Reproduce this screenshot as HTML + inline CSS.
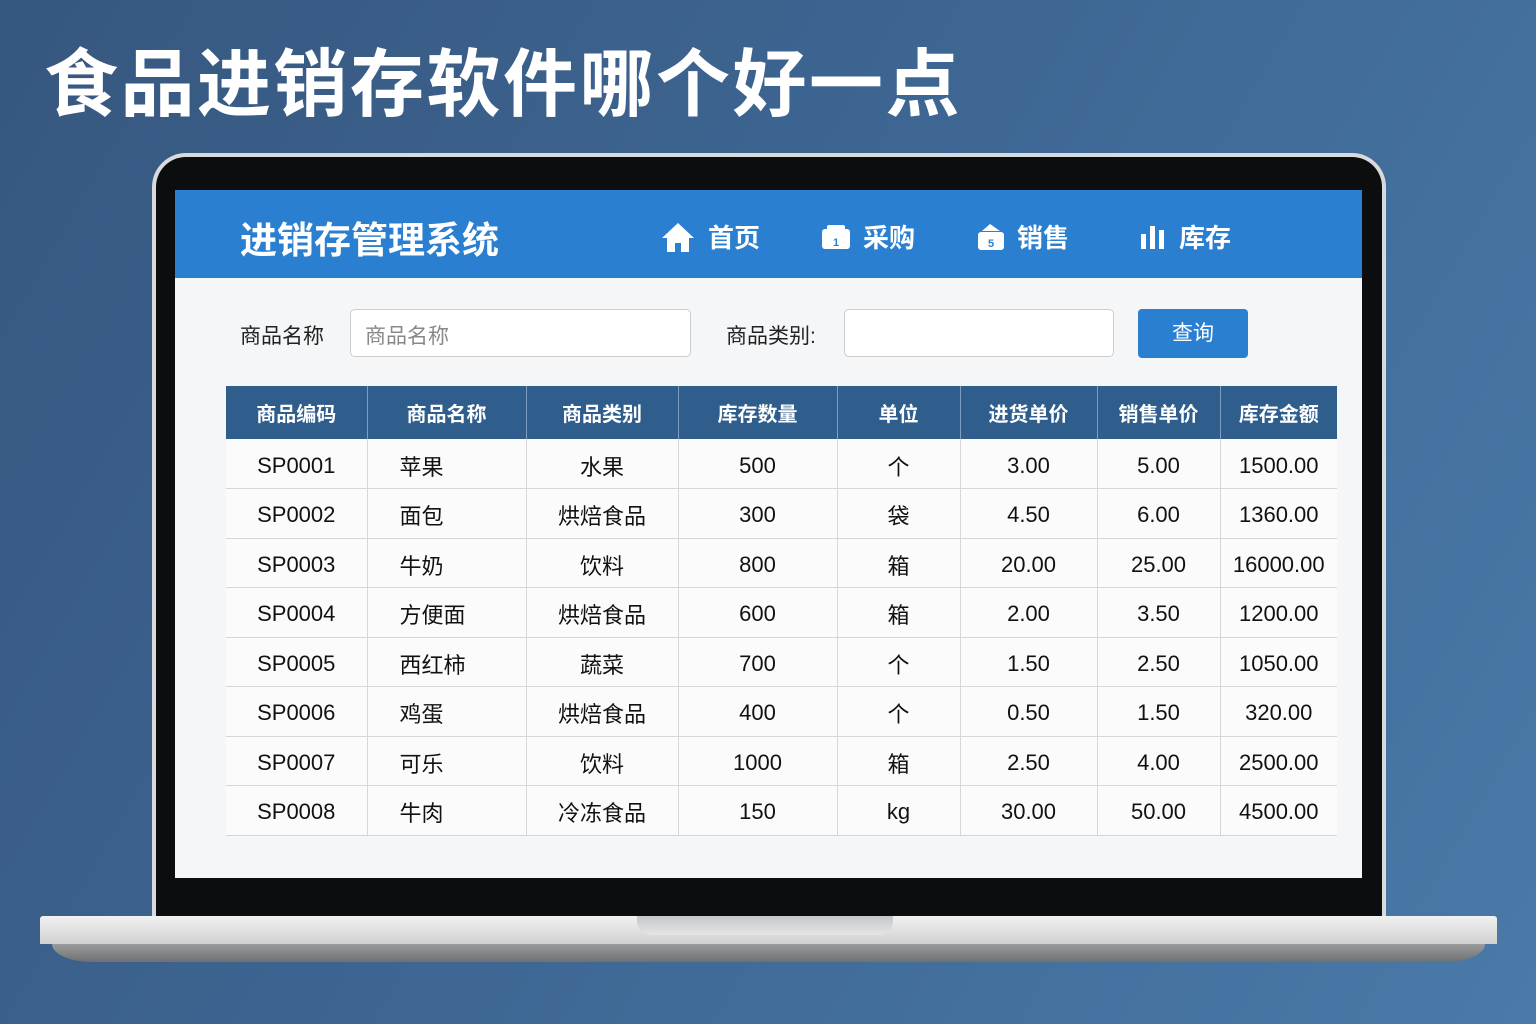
<!DOCTYPE html>
<html><head><meta charset="utf-8"><style>
*{margin:0;padding:0;box-sizing:border-box}
body{width:1536px;height:1024px;overflow:hidden;background:linear-gradient(120deg,#36577f 0%,#3e6794 50%,#4a7aa8 100%);font-family:"Liberation Sans","Noto Sans CJK SC",sans-serif;position:relative}
.title{position:absolute;left:44px;top:40px;font-size:74px;font-weight:bold;color:#fff;letter-spacing:2.5px;line-height:90px}
.lid{position:absolute;left:152px;top:153px;width:1234px;height:775px;border-radius:34px 34px 0 0;background:#d8dadc;padding:4px 4px 0}
.bezel{width:100%;height:100%;border-radius:30px 30px 0 0;background:#0c0d0f}
.screen{position:absolute;left:175px;top:190px;width:1187px;height:688px;background:#f5f6f7;overflow:hidden}
.hdr{height:88px;background:#2a7fd0;position:relative;color:#fff}
.hdr .t{position:absolute;left:65px;top:20px;font-size:37px;font-weight:bold}
.nav{position:absolute;top:28px;font-size:26px;display:flex;align-items:center;gap:12px;font-weight:bold}
.lbl{position:absolute;font-size:21px;color:#222}
.inp{position:absolute;height:48px;background:#fff;border:1.5px solid #ccc;border-radius:5px;font-size:21px;color:#888;padding:10px 14px}
.btn{position:absolute;left:963px;top:119px;width:110px;height:49px;background:#2a7fd0;border-radius:4px;color:#fff;font-size:21px;text-align:center;line-height:49px}
table{position:absolute;left:51px;top:196px;border-collapse:collapse;font-size:22px;color:#111}
th{background:#2f5d8c;color:#fff;font-weight:bold;height:53px;border-right:1px solid #7f9dbd;font-size:20px}
td{height:49.5px;border-bottom:1px solid #d4d6d8;border-right:1px solid #d4d6d8;text-align:center;background:#fbfbfb;padding-top:4px}
td:last-child,th:last-child{border-right:none}
td.l{text-align:left;padding-left:32px}
.base{position:absolute;left:40px;top:916px;width:1457px;height:28px;background:linear-gradient(#f2f2f2,#d0d0d0);border-radius:3px 3px 0 0}
.base2{position:absolute;left:52px;top:944px;width:1433px;height:18px;background:linear-gradient(#9a9b9d,#6e7072);border-radius:0 0 40px 40px/0 0 18px 18px}
.notch{position:absolute;left:637px;top:916px;width:256px;height:19px;background:linear-gradient(#c5c6c8,#e5e5e5);border-radius:0 0 14px 14px}
</style></head><body>
<div class="title">食品进销存软件哪个好一点</div>
<div class="lid"><div class="bezel"></div></div>
<div class="screen">
 <div class="hdr"><div class="t">进销存管理系统</div>
  <div class="nav" style="left:485px"><svg width="36" height="32" viewBox="0 0 36 32"><path d="M18 2L2 17h5v14h8v-9h6v9h8V17h5z" fill="#fff"/></svg>首页</div>
  <div class="nav" style="left:646px"><svg width="30" height="26" viewBox="0 0 30 26"><rect x="1" y="5" width="28" height="20" rx="3" fill="#fff"/><rect x="6" y="1" width="18" height="6" rx="2" fill="#fff"/><text x="15" y="22" font-size="11" text-anchor="middle" fill="#2a7fd0" font-family="Liberation Sans">1</text></svg>采购</div>
  <div class="nav" style="left:802px"><svg width="28" height="28" viewBox="0 0 28 28"><rect x="1" y="9" width="26" height="18" rx="3" fill="#fff"/><path d="M5 8l8-7 10 7z" fill="#fff"/><text x="14" y="24" font-size="11" text-anchor="middle" fill="#2a7fd0" font-family="Liberation Sans">5</text></svg>销售</div>
  <div class="nav" style="left:964px"><svg width="28" height="26" viewBox="0 0 28 26"><rect x="2" y="10" width="5" height="15" fill="#fff"/><rect x="11" y="2" width="5" height="23" fill="#fff"/><rect x="20" y="6" width="5" height="19" fill="#fff"/></svg>库存</div>
 </div>
 <div class="lbl" style="left:65px;top:130px">商品名称</div>
 <div class="inp" style="left:175px;top:119px;width:341px">商品名称</div>
 <div class="lbl" style="left:551px;top:130px">商品类别:</div>
 <div class="inp" style="left:669px;top:119px;width:270px"></div>
 <div class="btn">查询</div>
 <table>
 <tr><th style="width:141px">商品编码</th><th style="width:159px">商品名称</th><th style="width:152px">商品类别</th><th style="width:159px">库存数量</th><th style="width:123px">单位</th><th style="width:137px">进货单价</th><th style="width:123px">销售单价</th><th style="width:117px">库存金额</th></tr>
 <tr><td>SP0001</td><td class="l">苹果</td><td>水果</td><td>500</td><td>个</td><td>3.00</td><td>5.00</td><td>1500.00</td></tr>
 <tr><td>SP0002</td><td class="l">面包</td><td>烘焙食品</td><td>300</td><td>袋</td><td>4.50</td><td>6.00</td><td>1360.00</td></tr>
 <tr><td>SP0003</td><td class="l">牛奶</td><td>饮料</td><td>800</td><td>箱</td><td>20.00</td><td>25.00</td><td>16000.00</td></tr>
 <tr><td>SP0004</td><td class="l">方便面</td><td>烘焙食品</td><td>600</td><td>箱</td><td>2.00</td><td>3.50</td><td>1200.00</td></tr>
 <tr><td>SP0005</td><td class="l">西红柿</td><td>蔬菜</td><td>700</td><td>个</td><td>1.50</td><td>2.50</td><td>1050.00</td></tr>
 <tr><td>SP0006</td><td class="l">鸡蛋</td><td>烘焙食品</td><td>400</td><td>个</td><td>0.50</td><td>1.50</td><td>320.00</td></tr>
 <tr><td>SP0007</td><td class="l">可乐</td><td>饮料</td><td>1000</td><td>箱</td><td>2.50</td><td>4.00</td><td>2500.00</td></tr>
 <tr><td>SP0008</td><td class="l">牛肉</td><td>冷冻食品</td><td>150</td><td>kg</td><td>30.00</td><td>50.00</td><td>4500.00</td></tr>
 </table>
</div>
<div class="base"></div>
<div class="base2"></div>
<div class="notch"></div>
</body></html>
